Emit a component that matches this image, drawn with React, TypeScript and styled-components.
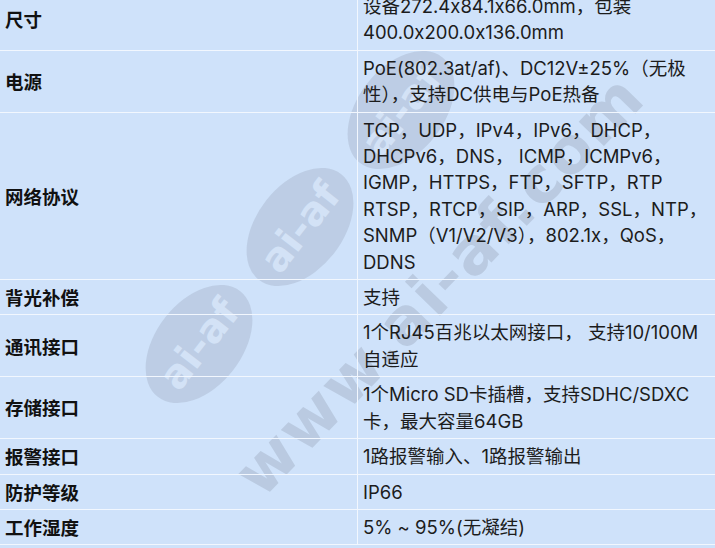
import React from "react";
import styled, { createGlobalStyle } from "styled-components";

const GlobalStyle = createGlobalStyle`
  html, body {
    margin: 0;
    padding: 0;
    background: #cfe2fa;
    overflow: hidden;
  }
`;

const Page = styled.div`
  position: relative;
  width: 715px;
  height: 548px;
  overflow: hidden;
  background: #cfe2fa;
  font-family: Inter, "Liberation Sans", "Noto Sans CJK SC", sans-serif;
  font-feature-settings: "calt" 0;
`;

const Watermark = styled.svg`
  position: absolute;
  left: 0;
  top: 0;
  width: 715px;
  height: 548px;
  pointer-events: none;
  z-index: 0;
`;

const SpecTable = styled.div`
  position: relative;
  z-index: 1;
  display: grid;
  grid-template-columns: 358px 1fr;
  margin-top: -11px;
`;

const Label = styled.div`
  display: flex;
  align-items: center;
  padding: 4px 5px;
  border-bottom: 1.5px solid #f2f7fe;
  border-right: 1.5px solid #f2f7fe;
  font-family: "Noto Sans CJK SC", sans-serif;
  font-size: 18.5px;
  font-weight: 700;
  color: #111;
  line-height: 26.4px;
`;

const Value = styled.div`
  padding: 4px 5px;
  border-bottom: 1.5px solid #f2f7fe;
  font-size: 18.5px;
  color: #1c1c1c;
  line-height: 26.4px;
  white-space: nowrap;
`;

const rows = [
  { label: "尺寸", lines: ["设备272.4x84.1x66.0mm，包装", "400.0x200.0x136.0mm"] },
  { label: "电源", lines: ["PoE(802.3at/af)、DC12V±25%（无极", "性），支持DC供电与PoE热备"] },
  {
    label: "网络协议",
    lines: [
      "TCP，UDP，IPv4，IPv6，DHCP，",
      "DHCPv6，DNS， ICMP，ICMPv6，",
      "IGMP，HTTPS，FTP，SFTP，RTP",
      "RTSP，RTCP，SIP，ARP，SSL，NTP，",
      "SNMP（V1/V2/V3），802.1x，QoS，",
      "DDNS",
    ],
  },
  { label: "背光补偿", lines: ["支持"] },
  { label: "通讯接口", lines: ["1个RJ45百兆以太网接口， 支持10/100M", "自适应"] },
  { label: "存储接口", lines: ["1个Micro SD卡插槽，支持SDHC/SDXC", "卡，最大容量64GB"] },
  { label: "报警接口", lines: ["1路报警输入、1路报警输出"] },
  { label: "防护等级", lines: ["IP66"] },
  { label: "工作湿度", lines: ["5% ~ 95%(无凝结)"] },
];

const badges = [
  { cx: 401, cy: 110 },
  { cx: 300, cy: 227 },
  { cx: 199, cy: 344 },
];

const App = () => {
  return (
    <>
      <GlobalStyle />
      <Page>
        <Watermark viewBox="0 0 715 548">
          {badges.map(({ cx, cy }) => (
            <g key={`${cx}_${cy}`} transform={`translate(${cx} ${cy}) rotate(-52)`}>
              <ellipse rx="67" ry="43" fill="#b5c5db" opacity="0.7" />
              <text
                x="0"
                y="14"
                textAnchor="middle"
                fontSize="40"
                fontWeight="700"
                fontFamily="'DejaVu Sans', sans-serif"
                fill="#d3e2f6"
              >
                ai-af
              </text>
            </g>
          ))}
          <text
            transform="translate(262 500) rotate(-46)"
            fontSize="64"
            fontWeight="700"
            fontFamily="'DejaVu Sans', sans-serif"
            fill="#b3c3d9"
            opacity="0.75"
            letterSpacing="2"
          >
            www.ai-af.com
          </text>
        </Watermark>
        <SpecTable>
          {rows.map(({ label, lines }, index) => (
            <React.Fragment key={`${label}_${index}`}>
              <Label>{label}</Label>
              <Value>
                {lines.map((line, i) => (
                  <div key={i}>{line}</div>
                ))}
              </Value>
            </React.Fragment>
          ))}
        </SpecTable>
      </Page>
    </>
  );
};

export default App;
